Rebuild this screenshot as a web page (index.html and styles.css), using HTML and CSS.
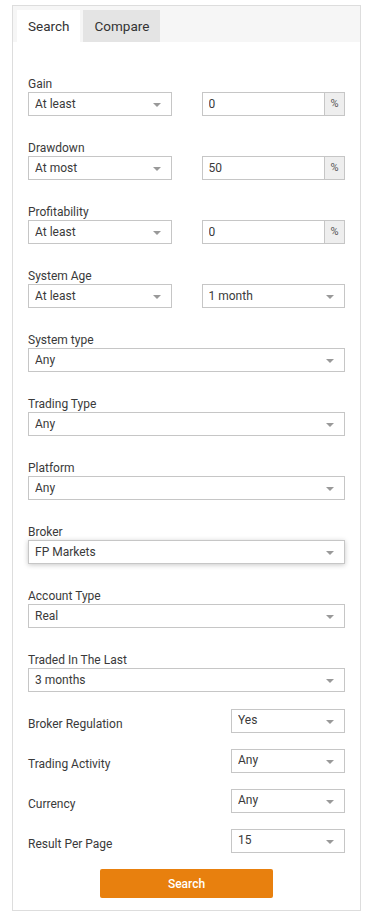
FILE: index.html
```html
<!DOCTYPE html>
<html lang="en">
<head>
<meta charset="UTF-8">
<meta name="viewport" content="width=device-width, initial-scale=1.0">
<title>System Search</title>
<link rel="stylesheet" href="styles.css">
</head>
<body>

<div class="panel">

<div class="tabs">
    <div class="tab active">Search</div>
    <div class="tab">Compare</div>
</div>

<form class="search-form">

<div class="group">
    <label>Gain</label>
    <div class="pair">
        <span class="select"><select><option>At least</option></select></span>
        <span class="input-group"><input value="0"><span class="addon">%</span></span>
    </div>
</div>

<div class="group">
    <label>Drawdown</label>
    <div class="pair">
        <span class="select"><select><option>At most</option></select></span>
        <span class="input-group"><input value="50"><span class="addon">%</span></span>
    </div>
</div>

<div class="group">
    <label>Profitability</label>
    <div class="pair">
        <span class="select"><select><option>At least</option></select></span>
        <span class="input-group"><input value="0"><span class="addon">%</span></span>
    </div>
</div>

<div class="group">
    <label>System Age</label>
    <div class="pair">
        <span class="select"><select><option>At least</option></select></span>
        <span class="select"><select><option>1 month</option></select></span>
    </div>
</div>

<div class="group">
    <label>System type</label>
    <span class="select"><select><option>Any</option></select></span>
</div>

<div class="group">
    <label>Trading Type</label>
    <span class="select"><select><option>Any</option></select></span>
</div>

<div class="group">
    <label>Platform</label>
    <span class="select"><select><option>Any</option></select></span>
</div>

<div class="group">
    <label>Broker</label>
    <span class="select focus"><select><option>FP Markets</option></select></span>
</div>

<div class="group">
    <label>Account Type</label>
    <span class="select"><select><option>Real</option></select></span>
</div>

<div class="group">
    <label>Traded In The Last</label>
    <span class="select"><select><option>3 months</option></select></span>
</div>

<div class="inline-rows">
    <div class="row">
        <label>Broker Regulation</label>
        <span class="select"><select><option>Yes</option></select></span>
    </div>
    <div class="row">
        <label>Trading Activity</label>
        <span class="select"><select><option>Any</option></select></span>
    </div>
    <div class="row">
        <label>Currency</label>
        <span class="select"><select><option>Any</option></select></span>
    </div>
    <div class="row">
        <label>Result Per Page</label>
        <span class="select"><select><option>15</option></select></span>
    </div>
</div>

<div class="actions">
    <button type="button">Search</button>
</div>

</form>
</div>

</body>
</html>
```

FILE: styles.css
```css
*{
    box-sizing:border-box;
}

body{
    margin:0;
    font-family:Roboto,"Liberation Sans",sans-serif;
    color:#3a3a3a;
    background:#fff;
}

.panel{
    margin:5px 8px 0 12px;
    border:1px solid #ddd;
    background:#fff;
}

.tabs{
    display:flex;
    gap:3px;
    padding:4px 0 0 4px;
    background:#f6f6f6;
}

.tab{
    height:32px;
    padding:0 11px;
    line-height:32px;
    font-size:13.5px;
    color:#333;
    background:#e4e4e4;
}

.tab.active{
    background:#fff;
}

.search-form{
    padding:34px 15px 12px 15px;
}

.group{
    margin-bottom:24px;
}

.group label{
    display:block;
    height:16px;
    line-height:16px;
    font-size:12px;
}

.pair{
    display:grid;
    grid-template-columns:1fr 1fr;
    gap:30px;
}

.select{
    position:relative;
    display:block;
}

.select::after{
    content:"";
    position:absolute;
    right:11px;
    top:11px;
    border-left:4px solid transparent;
    border-right:4px solid transparent;
    border-top:4px solid #999;
    pointer-events:none;
}

select,input{
    display:block;
    width:100%;
    height:24px;
    margin:0;
    padding:0 6px;
    border:1px solid #c6c6c6;
    border-radius:0;
    background:#fff;
    color:#3a3a3a;
    font-family:inherit;
    font-size:12px;
    appearance:none;
    -webkit-appearance:none;
    outline:none;
}

.focus select{
    box-shadow:0 1px 5px rgba(0,0,0,.22);
}

.input-group{
    display:flex;
}

.input-group input{
    flex:1;
    min-width:0;
}

.addon{
    width:20px;
    height:24px;
    line-height:22px;
    text-align:center;
    font-size:11px;
    color:#555;
    background:#eee;
    border:1px solid #c6c6c6;
    border-left:none;
}

.inline-rows{
    margin-top:-7px;
}

.row{
    display:flex;
    align-items:center;
    justify-content:space-between;
    margin-bottom:16px;
}

.row label{
    font-size:12px;
    padding-top:6px;
}

.row .select{
    width:114px;
}

.row select{
    padding-bottom:3px;
}

.actions{
    display:flex;
    justify-content:center;
}

button{
    width:173px;
    height:29px;
    border:none;
    border-radius:2px;
    background:#e8800e;
    color:#fff;
    font-family:inherit;
    font-size:12px;
    font-weight:500;
    cursor:pointer;
}
```
